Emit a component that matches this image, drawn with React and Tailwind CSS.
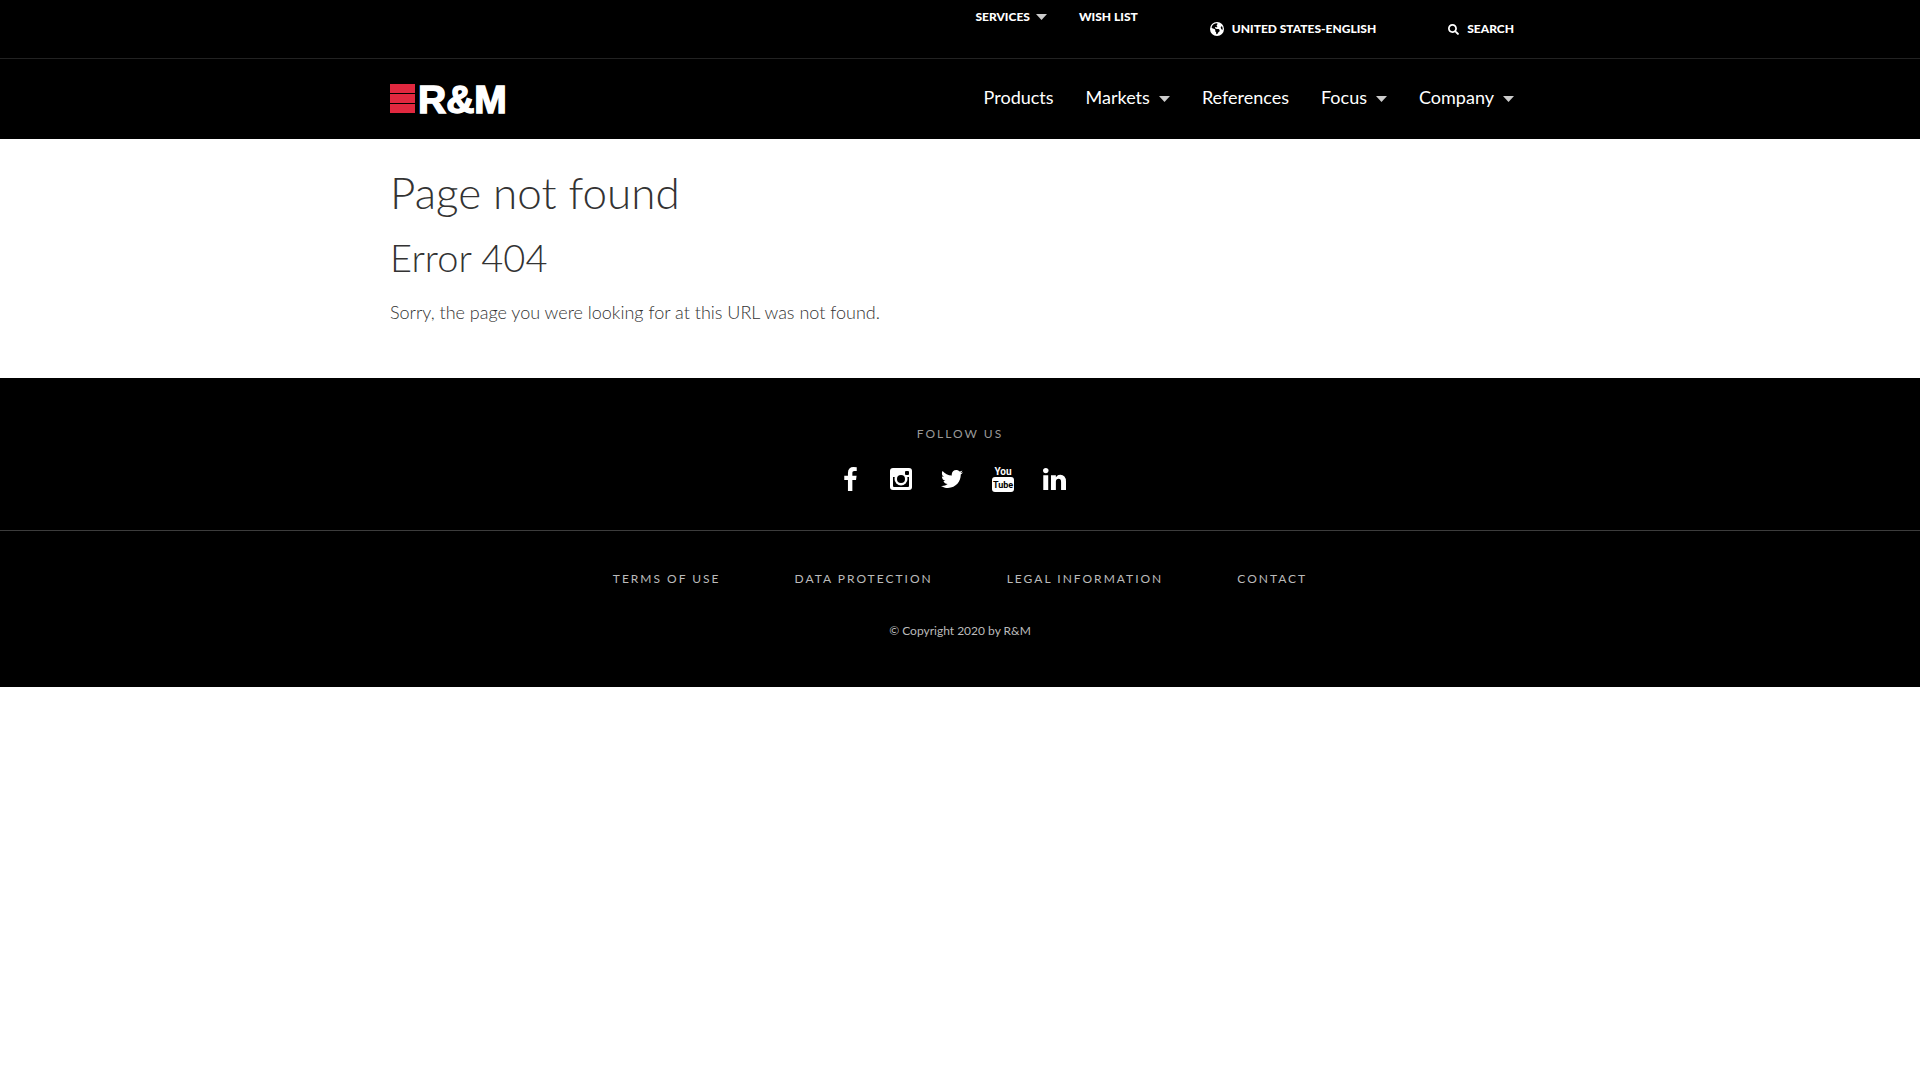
import { FaTwitter, FaSearch } from "react-icons/fa";
import { FaEarthAmericas } from "react-icons/fa6";

const mainNav = [
  { label: "Products" },
  { label: "Markets", menu: true },
  { label: "References" },
  { label: "Focus", menu: true },
  { label: "Company", menu: true },
];

const legalLinks = ["Terms of use", "Data protection", "Legal information", "Contact"];

function Caret({ className }) {
  return (
    <svg viewBox="0 0 11 6" className={`h-[6px] w-[11px] fill-[#cccccc] ${className}`} aria-hidden="true">
      <path d="M0 0h11L5.500 6z" />
    </svg>
  );
}

function Logo() {
  return (
    <svg viewBox="0 -6 120 44" className="h-11 w-[120px]" role="img" aria-label="R&M">
      <g fill="#e1283f">
        <rect y="1" width="25" height="9" />
        <rect y="11" width="25" height="9" />
        <rect y="21" width="25" height="9" />
      </g>
      <text
        x="28"
        y="30"
        fill="#fff"
        stroke="#fff"
        strokeWidth="1.5"
        fontFamily="Liberation Sans, Arial, sans-serif"
        fontWeight="700"
        fontSize="39"
      >
        R&amp;M
      </text>
    </svg>
  );
}

function FacebookIcon() {
  return (
    <svg viewBox="479 0 864 1664" className="h-6 w-[13px]" fill="currentColor" aria-hidden="true">
      <path d="M1343 12v264h-157q-86 0-116 36t-30 108v189h293l-39 296h-254v759h-306v-759h-255v-296h255v-218q0-186 104-288.500t277-102.500q147 0 228 12z" />
    </svg>
  );
}

function InstagramIcon() {
  return (
    <svg viewBox="0 0 22 22" className="h-[22px] w-[22px]" aria-hidden="true">
      <rect width="22" height="22" rx="3" fill="#fff" />
      <path d="M3 9h16v9a1 1 0 0 1-1 1H4a1 1 0 0 1-1-1z" fill="#000" />
      <circle cx="11" cy="11" r="6.500" fill="#fff" />
      <circle cx="11" cy="11" r="4" fill="#000" />
      <rect x="15" y="3" width="4" height="4" rx="1" fill="#000" />
    </svg>
  );
}

function YoutubeIcon() {
  return (
    <svg viewBox="0 0 22 28" className="h-7 w-[22px]" aria-hidden="true">
      <rect y="12" width="22" height="15" rx="3" fill="#fff" />
      <g fontFamily="Roboto, sans-serif" fontWeight="700" textAnchor="middle">
        <text x="11" y="10" fontSize="10" fill="#fff">You</text>
        <text x="11" y="23" fontSize="9" fill="#000">Tube</text>
      </g>
    </svg>
  );
}

function LinkedinIcon() {
  return (
    <svg viewBox="0 434 1536 1468" className="h-[22px] w-[23px]" fill="currentColor" aria-hidden="true">
      <path d="M349 911v991h-330v-991h330zM370 605q1 73-50.500 122t-135.500 49h-2q-82 0-132-49t-50-122q0-74 51.500-122.500t134.500-48.500h2q83 0 133 48.500t51 122.500zM1536 1334v568h-329v-530q0-105-40.500-164.500t-126.500-59.500q-63 0-105.500 34.500t-63.500 85.500q-11 30-11 81v553h-329q2-399 2-647t-1-296l-1-48h329v144h-2q20-32 41-56t56.500-52 87-43.500 114.500-15.500q171 0 275 113.500t104 332.500z" />
    </svg>
  );
}

const socials = [
  { name: "Facebook", icon: <FacebookIcon /> },
  { name: "Instagram", icon: <InstagramIcon /> },
  { name: "Twitter", icon: <FaTwitter size={22} /> },
  { name: "YouTube", icon: <YoutubeIcon /> },
  { name: "LinkedIn", icon: <LinkedinIcon /> },
];

function Header() {
  return (
    <header className="bg-black text-white">
      <div className="border-b border-[#222222]">
        <div className="mx-auto flex h-[58px] max-w-[1170px] justify-end pr-[31px] pl-[15px] text-[12px] leading-4 font-black uppercase">
          <button type="button" className="mt-[9px] flex h-4 items-center uppercase">
            Services
            <Caret className="ml-[6px]" />
          </button>
          <a href="#" className="mt-[9px] ml-8 h-4">Wish list</a>
          <button type="button" className="ml-[72px] flex items-center gap-2 uppercase">
            <FaEarthAmericas size={14} />
            United States-English
          </button>
          <button type="button" className="ml-[72px] flex items-center gap-2 uppercase">
            <FaSearch size={11} />
            Search
          </button>
        </div>
      </div>
      <div className="mx-auto flex h-20 max-w-[1170px] items-center justify-between pr-[31px] pl-[15px]">
        <a href="#">
          <Logo />
        </a>
        <nav className="flex gap-8 pb-1 text-[18px] leading-6">
          {mainNav.map((item) => (
            <a key={item.label} href="#" className="flex items-center">
              {item.label}
              {item.menu && <Caret className="mt-[3px] ml-[9px]" />}
            </a>
          ))}
        </nav>
      </div>
    </header>
  );
}

function Footer() {
  return (
    <footer className="bg-black text-center text-[#bbbbbb]">
      <div className="border-b border-[#3c3c3c] pt-12 pb-[35px]">
        <h3 className="text-[12px] leading-4 tracking-[2px] text-[#999999] uppercase">Follow us</h3>
        <ul className="mt-[21px] flex justify-center pr-4 text-white">
          {socials.map((s) => (
            <li key={s.name} className="w-[51px]">
              <a href="#" aria-label={s.name} className="flex h-8 items-center justify-center">
                {s.icon}
              </a>
            </li>
          ))}
        </ul>
      </div>
      <div className="pt-10 pb-12 text-[12px] leading-4">
        <ul className="flex justify-center gap-[74px] tracking-[2px] uppercase">
          {legalLinks.map((label) => (
            <li key={label}>
              <a href="#">{label}</a>
            </li>
          ))}
        </ul>
        <p className="mt-9">© Copyright 2020 by R&amp;M</p>
      </div>
    </footer>
  );
}

export default function App() {
  return (
    <div className="min-h-screen bg-white font-[Lato,sans-serif]">
      <Header />
      <main className="mx-auto max-w-[1170px] px-[15px] pt-[27px] pb-[54px] font-light text-[#333333]">
        <h1 className="text-[44px] leading-[52px]">Page not found</h1>
        <h2 className="mt-[13px] text-[38px] leading-[52px]">Error 404</h2>
        <p className="mt-[17px] text-[18px] leading-6">Sorry, the page you were looking for at this URL was not found.</p>
      </main>
      <Footer />
    </div>
  );
}
